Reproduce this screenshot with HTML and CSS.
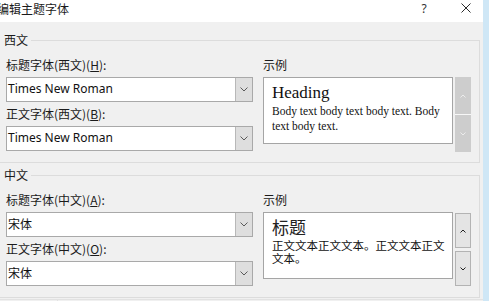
FILE: index.html
```html
<!DOCTYPE html>
<html lang="zh-CN">
<head>
<meta charset="utf-8">
<title>编辑主题字体</title>
<link rel="stylesheet" href="styles.css">
</head>
<body>
<div class="window">
  <div class="titlebar">
    <span class="title">编辑主题字体</span>
    <span class="help">?</span>
    <span class="close"><svg width="10" height="10" viewBox="0 0 10 10"><path d="M0.5 0.5 L9.5 9.5 M9.5 0.5 L0.5 9.5" stroke="#2b2b2b" stroke-width="1" fill="none"/></svg></span>
  </div>
  <div class="content">
    <section class="group">
      <div class="group-head"><span class="group-label">西文</span><span class="group-line"></span></div>
      <div class="group-body">
        <div class="fields">
          <div class="field-label">标题字体(西文)(<u>H</u>):</div>
          <div class="combo"><span class="combo-text">Times New Roman</span><span class="combo-btn"><svg width="8" height="5" viewBox="0 0 8 5"><polyline points="0.5,0.5 4,4 7.5,0.5" stroke="#5a5a5a" fill="none"/></svg></span></div>
          <div class="field-label">正文字体(西文)(<u>B</u>):</div>
          <div class="combo"><span class="combo-text">Times New Roman</span><span class="combo-btn"><svg width="8" height="5" viewBox="0 0 8 5"><polyline points="0.5,0.5 4,4 7.5,0.5" stroke="#5a5a5a" fill="none"/></svg></span></div>
        </div>
        <div class="sample">
          <div class="field-label">示例</div>
          <div class="sample-row">
            <div class="preview preview-latin">
              <div class="latin-heading">Heading</div>
              <div class="latin-body">Body text body text body text. Body text body text.</div>
            </div>
            <div class="scroll scroll-disabled">
              <span class="scroll-btn"><svg width="6" height="4" viewBox="0 0 6 4"><polyline points="0.5,3.5 3,1 5.5,3.5" stroke="#ececec" fill="none"/></svg></span>
              <span class="scroll-btn"><svg width="6" height="4" viewBox="0 0 6 4"><polyline points="0.5,0.5 3,3 5.5,0.5" stroke="#ececec" fill="none"/></svg></span>
            </div>
          </div>
        </div>
      </div>
    </section>
    <section class="group group-second">
      <div class="group-head"><span class="group-label">中文</span><span class="group-line"></span></div>
      <div class="group-body">
        <div class="fields">
          <div class="field-label">标题字体(中文)(<u>A</u>):</div>
          <div class="combo"><span class="combo-text cjk-value">宋体</span><span class="combo-btn"><svg width="8" height="5" viewBox="0 0 8 5"><polyline points="0.5,0.5 4,4 7.5,0.5" stroke="#5a5a5a" fill="none"/></svg></span></div>
          <div class="field-label">正文字体(中文)(<u>O</u>):</div>
          <div class="combo"><span class="combo-text cjk-value">宋体</span><span class="combo-btn"><svg width="8" height="5" viewBox="0 0 8 5"><polyline points="0.5,0.5 4,4 7.5,0.5" stroke="#5a5a5a" fill="none"/></svg></span></div>
        </div>
        <div class="sample">
          <div class="field-label">示例</div>
          <div class="sample-row">
            <div class="preview preview-cjk">
              <div class="cjk-heading">标题</div>
              <div class="cjk-body">正文文本正文文本。正文文本正文文本。</div>
            </div>
            <div class="scroll scroll-active">
              <span class="scroll-btn"><svg width="6" height="4" viewBox="0 0 6 4"><polyline points="0.5,3.5 3,1 5.5,3.5" stroke="#222" fill="none"/></svg></span>
              <span class="scroll-btn"><svg width="6" height="4" viewBox="0 0 6 4"><polyline points="0.5,0.5 3,3 5.5,0.5" stroke="#222" fill="none"/></svg></span>
            </div>
          </div>
        </div>
      </div>
    </section>
    <div class="footer"><span class="footer-cell"></span></div>
  </div>
</div>
</body>
</html>
```

FILE: styles.css
```css
* { box-sizing: border-box; }

body {
  margin: 0;
  width: 489px;
  height: 301px;
  overflow: hidden;
  background: #cfe7f6;
}

.window {
  width: 483px;
  height: 301px;
  background: #f0f0f0;
  font-family: "Noto Sans CJK SC", "Noto Sans", sans-serif;
  font-size: 12px;
  color: #1b1b1b;
  overflow: hidden;
}

.titlebar {
  height: 22px;
  background: #ffffff;
  display: flex;
  align-items: flex-start;
  padding-right: 12px;
}

.title {
  flex: 1;
  margin-left: -3px;
  line-height: 18px;
  font-size: 12px;
  color: #1b1b1b;
}

.help {
  width: 10px;
  font-family: "Noto Sans", sans-serif;
  font-size: 12px;
  line-height: 18px;
  text-align: center;
  color: #333;
}

.close {
  display: flex;
  margin-left: 32px;
  margin-top: 3px;
  width: 10px;
  height: 10px;
}

.content {
  padding-top: 11px;
}

.group {
  margin-left: -1px;
  width: 481px;
}

.group-second {
  margin-top: 5px;
}

.group-head {
  display: flex;
  height: 14px;
}

.group-label {
  line-height: 14px;
  padding: 0 3px 0 5px;
}

.group-line {
  flex: 1;
  align-self: flex-end;
  height: 7px;
  border-top: 1px solid #dcdcdc;
  border-right: 1px solid #dcdcdc;
}

.group-body {
  display: flex;
  gap: 10px;
  padding: 10px 8px 10px 6px;
  border: 1px solid #dcdcdc;
  border-top: none;
}

.fields {
  width: 247px;
  display: flex;
  flex-direction: column;
}

.field-label {
  line-height: 16px;
  height: 16px;
  margin-bottom: 4px;
  white-space: nowrap;
}

.combo {
  height: 25px;
  display: flex;
  background: #fff;
  border: 1px solid #a9a9a9;
  margin-bottom: 4px;
}

.combo:last-child {
  margin-bottom: 0;
}

.combo-text {
  flex: 1;
  padding-left: 1px;
  font-family: "Noto Sans", "Noto Sans CJK SC", sans-serif;
  font-size: 12px;
  line-height: 22px;
  color: #111;
}

.cjk-value {
  font-family: "Noto Sans CJK SC", sans-serif;
}

.combo-btn {
  width: 17px;
  display: flex;
  align-items: center;
  justify-content: center;
  background: #dedede;
  border-left: 1px solid #b8b8b8;
}

.sample {
  width: 208px;
  display: flex;
  flex-direction: column;
}

.sample-row {
  display: flex;
  gap: 2px;
}

.preview {
  width: 190px;
  height: 67px;
  background: #fff;
  border: 1px solid #a5a5a5;
  padding: 4px 6px 0 8px;
  overflow: hidden;
}

.latin-heading {
  font-family: "Liberation Serif", serif;
  font-size: 17px;
  line-height: 22px;
  color: #111;
}

.latin-body {
  font-family: "Liberation Serif", serif;
  font-size: 11.5px;
  line-height: 15px;
  color: #111;
}

.preview-cjk {
  padding-top: 1px;
}

.cjk-heading {
  font-size: 17px;
  line-height: 25px;
  color: #222;
}

.cjk-body {
  font-size: 11.5px;
  line-height: 13px;
  color: #111;
}

.scroll {
  width: 16px;
  height: 75px;
  display: flex;
  flex-direction: column;
}

.scroll-disabled {
  gap: 1px;
  background: #f7f7f7;
}

.scroll-disabled .scroll-btn {
  flex: 1;
  background: #cdcdcd;
}

.scroll-active {
  gap: 3px;
  padding-top: 1px;
  padding-bottom: 1px;
}

.scroll-active .scroll-btn {
  flex: 1;
  background: #e4e4e4;
  border: 1px solid #b3b3b3;
}

.scroll-btn {
  display: flex;
  align-items: center;
  justify-content: center;
}

.footer {
  margin-top: 1px;
  height: 10px;
  border-top: 1px solid #e2e2e2;
  display: flex;
}

.footer-cell {
  width: 58px;
  border-right: 1px solid #e2e2e2;
}
```
